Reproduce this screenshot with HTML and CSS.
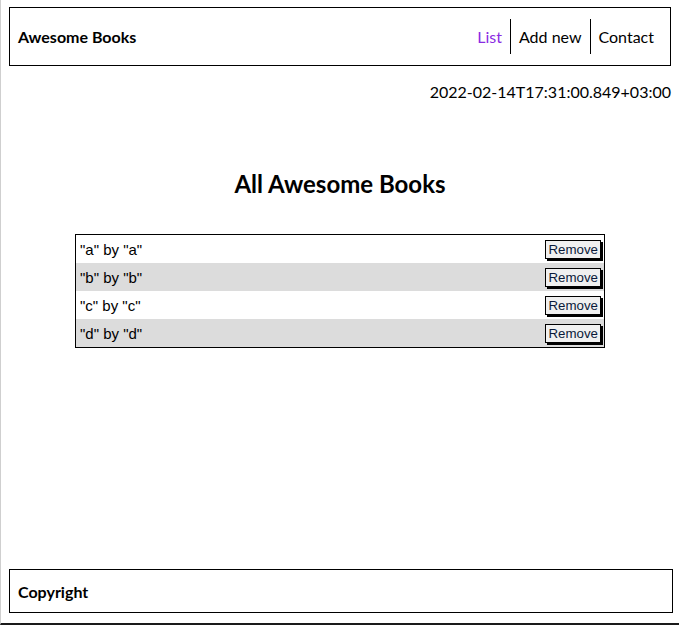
FILE: index.html
```html
<!DOCTYPE html>
<html lang="en">
<head>
<meta charset="utf-8">
<title>Awesome Books</title>
<link rel="stylesheet" href="styles.css">
</head>
<body>
<header class="site-header">
  <span class="brand">Awesome Books</span>
  <nav class="nav">
    <a class="nav-link active" href="#">List</a>
    <a class="nav-link" href="#">Add new</a>
    <a class="nav-link" href="#">Contact</a>
  </nav>
</header>
<p class="date">2022-02-14T17:31:00.849+03:00</p>
<main class="main">
  <h2 class="title">All Awesome Books</h2>
  <ul class="books">
    <li class="book"><span>"a" by "a"</span><button class="remove">Remove</button></li>
    <li class="book"><span>"b" by "b"</span><button class="remove">Remove</button></li>
    <li class="book"><span>"c" by "c"</span><button class="remove">Remove</button></li>
    <li class="book"><span>"d" by "d"</span><button class="remove">Remove</button></li>
  </ul>
</main>
<footer class="site-footer">
  <span class="brand">Copyright</span>
</footer>
</body>
</html>
```
FILE: styles.css
```css
html {
  box-sizing: border-box;
  border-left: 1px solid #cfcfcf;
  border-bottom: 2px solid #1a1a1a;
  min-height: 100vh;
}
*, *::before, *::after { box-sizing: inherit; }
body {
  margin: 0;
  padding: 7px 8px 10px;
  min-height: calc(100vh - 2px);
  display: flex;
  flex-direction: column;
  font-family: Lato, "Liberation Sans", sans-serif;
  color: #000;
}
.site-header {
  height: 59px;
  border: 1px solid #000;
  display: flex;
  align-items: center;
  justify-content: space-between;
  padding: 0 8px 0 8px;
}
.brand {
  font-weight: bold;
  font-size: 16px;
}
.nav { display: flex; }
.nav-link {
  color: #000;
  text-decoration: none;
  font-size: 16px;
  line-height: 35px;
  padding: 0 8px;
  border-left: 1px solid #000;
}
.nav-link.active {
  color: #8a2be2;
  border-left: none;
}
.date {
  margin: 16px 0 0;
  text-align: right;
  font-size: 16px;
  line-height: 19px;
}
.main { flex: 1; }
.title {
  margin: 68px 0 36px;
  text-align: center;
  font-size: 24px;
  line-height: 29px;
}
.books {
  list-style: none;
  margin: 0 auto;
  padding: 0;
  width: 530px;
  border: 1px solid #000;
}
.book {
  height: 28px;
  display: flex;
  align-items: center;
  justify-content: space-between;
  padding: 0 3px 0 4px;
  font-family: "Liberation Sans", Arial, sans-serif;
  font-size: 15px;
}
.book:nth-child(even) { background: #dcdcdc; }
.remove {
  font-family: "Liberation Sans", Arial, sans-serif;
  font-size: 13.3px;
  color: #0a1a3a;
  background: #f0f0f0;
  border: 1px solid #000;
  box-shadow: 2px 2px 0 #000;
  padding: 1px 2px;
  height: 19px;
  line-height: 15px;
  margin-top: 1px;
}
.site-footer {
  height: 44px;
  border: 1px solid #000;
  display: flex;
  align-items: center;
  padding: 0 8px;
  margin-right: -2px;
}
```
